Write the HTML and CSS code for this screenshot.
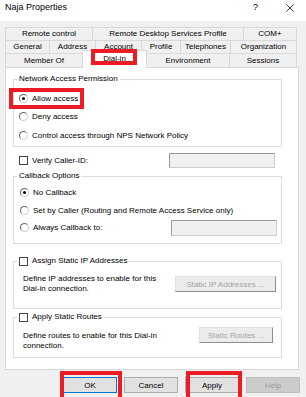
FILE: index.html
```html
<!DOCTYPE html>
<html>
<head>
<meta charset="utf-8">
<title>Naja Properties</title>
<link rel="stylesheet" href="styles.css">
</head>
<body>
<div class="window">
  <div class="titlebar">
    <span class="title">Naja Properties</span>
    <span class="qmark">?</span>
    <svg class="close" width="8" height="8" viewBox="0 0 8 8"><path d="M0.3 0.3L7.7 7.7M7.7 0.3L0.3 7.7" stroke="#111" stroke-width="0.8" fill="none"/></svg>
  </div>
  <div class="content">
    <div class="tabs">
      <div class="tabrow row1">
        <div class="tab">Remote control</div>
        <div class="tab">Remote Desktop Services Profile</div>
        <div class="tab last">COM+</div>
      </div>
      <div class="tabrow row2">
        <div class="tab">General</div>
        <div class="tab">Address</div>
        <div class="tab">Account</div>
        <div class="tab">Profile</div>
        <div class="tab">Telephones</div>
        <div class="tab last">Organization</div>
      </div>
      <div class="tabrow row3">
        <div class="tab">Member Of</div>
        <div class="tab selected">Dial-in</div>
        <div class="tab">Environment</div>
        <div class="tab last">Sessions</div>
      </div>
    </div>
    <div class="panel">
      <fieldset class="group g1">
        <legend class="legend">Network Access Permission</legend>
        <div class="gbody gb1">
          <div class="opt"><span class="radio on"></span><span>Allow access</span></div>
          <div class="opt"><span class="radio"></span><span>Deny access</span></div>
          <div class="opt"><span class="radio"></span><span>Control access through NPS Network Policy</span></div>
        </div>
      </fieldset>
      <div class="verify">
        <span class="check"></span><span>Verify Caller-ID:</span>
        <span class="field f-verify"></span>
      </div>
      <fieldset class="group g2">
        <legend class="legend">Callback Options</legend>
        <div class="gbody gb2">
          <div class="opt2"><span class="radio on"></span><span>No Callback</span></div>
          <div class="opt2"><span class="radio"></span><span>Set by Caller (Routing and Remote Access Service only)</span></div>
          <div class="opt2"><span class="radio"></span><span>Always Callback to:</span><span class="field f-call"></span></div>
        </div>
      </fieldset>
      <fieldset class="group g3">
        <legend class="legend legend-check"><span class="check"></span><span>Assign Static IP Addresses</span></legend>
        <div class="gbody gb3">
          <div class="desc">Define IP addresses to enable for this<br>Dial-in connection.</div>
          <span class="sbtn sbtn-ip">Static IP Addresses ...</span>
        </div>
      </fieldset>
      <fieldset class="group g4">
        <legend class="legend legend-check"><span class="check"></span><span>Apply Static Routes</span></legend>
        <div class="gbody gb4">
          <div class="desc desc4">Define routes to enable for this Dial-in<br>connection.</div>
          <span class="sbtn sbtn-routes">Static Routes ...</span>
        </div>
      </fieldset>
    </div>
    <div class="buttons">
      <span class="btn default">OK</span>
      <span class="btn">Cancel</span>
      <span class="btn">Apply</span>
      <span class="btn disabled">Help</span>
    </div>
  </div>
</div>
<div class="mark mark-dialin"></div>
<div class="mark mark-allow"></div>
<div class="mark mark-ok"></div>
<div class="mark mark-apply"></div>
</body>
</html>
```
FILE: styles.css
```css
* { box-sizing: border-box; }
html, body { margin: 0; padding: 0; }
body {
  width: 306px;
  height: 397px;
  overflow: hidden;
  background: #f0f0f0;
  font-family: "Liberation Sans", Arial, sans-serif;
  font-size: 8px;
  color: #000;
  position: relative;
}
.titlebar {
  height: 21px;
  background: #fff;
  display: flex;
  align-items: flex-start;
  padding: 2px 12px 0 5px;
}
.title { font-size: 9px; line-height: 10px; }
.qmark { margin-left: auto; font-size: 9px; line-height: 10px; }
.close { margin-left: 28px; margin-top: 2px; }
.content { padding: 6px 0 0 5px; }
.tabs { width: 292px; }
.tabrow { display: grid; }
.row1 { grid-template-columns: 87px 151px 54px; height: 13px; }
.row2 { grid-template-columns: 44px 46px 46px 39px 50px 67px; height: 13px; }
.row3 { grid-template-columns: 77px 65px 82px 68px; height: 14px; }
.tab {
  border-top: 1px solid #d9d9d9;
  border-left: 1px solid #d9d9d9;
  background: #f0f0f0;
  display: flex;
  align-items: center;
  justify-content: center;
  white-space: nowrap;
  line-height: 10px;
}
.tab.last { border-right: 1px solid #d9d9d9; }
.tab.selected {
  background: #fff;
  border-right: 1px solid #d9d9d9;
  margin-top: -3px;
  margin-bottom: -1px;
  position: relative;
  z-index: 1;
  padding-bottom: 2px;
}
.row3 .tab.selected + .tab { border-left: none; }
.panel {
  width: 294px;
  height: 303px;
  border: 1px solid #d9d9d9;
  background: #fff;
  padding: 6px 0 0 7px;
}
.group {
  margin: 0;
  padding: 0;
  width: 269px;
  min-inline-size: 0;
  border: 1px solid #dcdcdc;
}
.legend {
  margin-left: 3px;
  padding: 0 2px;
  line-height: 10px;
  height: 10px;
  display: flex;
  align-items: center;
}
.legend-check .check { margin-right: 4px; }
.gb1 { padding: 5px 0 1.5px 5px; }
.opt { height: 18.5px; display: flex; align-items: center; }
.gb2 { padding: 3px 4px 6.5px 6px; }
.opt2 { height: 17.5px; display: flex; align-items: center; }
.radio {
  width: 9px;
  height: 9px;
  border-radius: 50%;
  border: 1px solid;
  border-color: #6a6a6a #cfcfcf #cfcfcf #6a6a6a;
  background: #fff;
  margin-right: 4px;
  display: flex;
  align-items: center;
  justify-content: center;
  flex: none;
}
.radio.on::after {
  content: "";
  width: 3px;
  height: 3px;
  border-radius: 50%;
  background: #000;
}
.check {
  width: 9px;
  height: 9px;
  border: 1px solid #444;
  background: #fff;
  flex: none;
}
.verify {
  display: flex;
  align-items: center;
  height: 15px;
  margin-top: 6px;
  padding-left: 6px;
}
.verify .check { margin-right: 4px; }
.field {
  background: #f0f0f0;
  border: 1px solid;
  border-color: #9a9a9a #cdcdcd #cdcdcd #9a9a9a;
  margin-left: auto;
  flex: none;
}
.f-verify { width: 106px; height: 15px; margin-right: 23px; }
.f-call { width: 106px; height: 16px; }
.g2 { margin-top: 3px; }
.g3 { margin-top: 12px; }
.g4 { margin-top: 3px; }
.gb3 {
  display: flex;
  align-items: center;
  padding: 8px 5px 14px 9px;
}
.gb4 {
  display: flex;
  align-items: flex-start;
  padding: 5px 8px 6.5px 9px;
}
.desc { line-height: 10px; }
.desc4 { margin-top: 3.5px; }
.sbtn {
  margin-left: auto;
  height: 16px;
  display: flex;
  align-items: center;
  justify-content: center;
  background: #ececec;
  color: #a3a3a3;
  border: 1px solid;
  border-color: #e0e0e0 #8c8c8c #8c8c8c #e0e0e0;
  white-space: nowrap;
}
.sbtn-ip { width: 101px; }
.sbtn-routes { width: 74px; }
.buttons {
  display: flex;
  justify-content: flex-end;
  gap: 7px;
  margin-top: 7px;
  padding-right: 6px;
}
.btn {
  width: 54px;
  height: 16px;
  display: flex;
  align-items: center;
  justify-content: center;
  background: #e1e1e1;
  border: 1px solid #adadad;
}
.btn.default { border-color: #0078d7; }
.btn.disabled { background: #cccccc; border-color: #bfbfbf; color: #9d9d9d; }
.mark {
  position: absolute;
  border: 4px solid #ed1c24;
  z-index: 5;
}
.mark-dialin { left: 91px; top: 49px; width: 46px; height: 16px; }
.mark-allow { left: 9px; top: 88px; width: 75px; height: 21px; }
.mark-ok { left: 60px; top: 371px; width: 62px; height: 30px; }
.mark-apply { left: 186px; top: 371px; width: 56px; height: 30px; }
```
